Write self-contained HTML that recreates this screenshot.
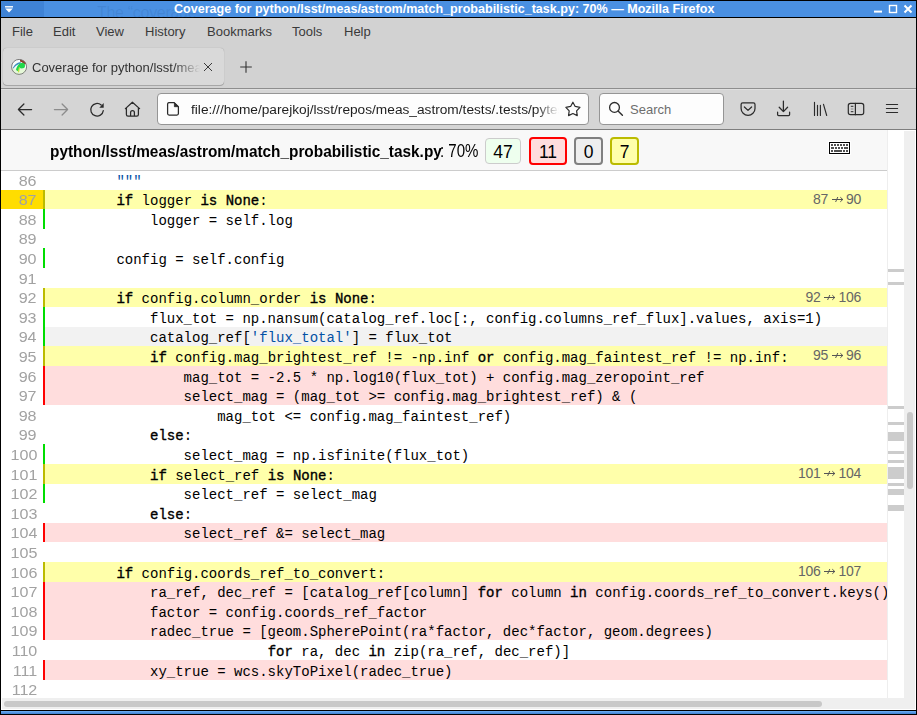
<!DOCTYPE html>
<html><head><meta charset="utf-8">
<style>
*{margin:0;padding:0;box-sizing:border-box}
html,body{width:917px;height:715px;overflow:hidden;background:#000}
body{position:relative;font-family:"Liberation Sans",sans-serif}
.abs{position:absolute}
#title{position:absolute;left:1px;top:1px;width:915px;height:16px;background:#4a90e2}
#title .dk{position:absolute;left:0;top:0;width:43px;height:16px;background:#3f83d6}
#title .txt{position:absolute;left:173px;top:1px;font:bold 12.56px "Liberation Sans",sans-serif;color:#fff;white-space:pre;line-height:15px}
#menubar{position:absolute;left:1px;top:18px;width:915px;height:26px;background:#d2d2d2}
.mi{position:absolute;top:6px;font-size:13px;color:#3a3a3a;white-space:pre;line-height:16px}
#tabbar{position:absolute;left:1px;top:44px;width:915px;height:44px;background:#d2d2d2}
#tab{position:absolute;left:2px;top:4px;width:221px;height:37px;background:#d9d9d9;border-radius:4px;box-shadow:0 0 1px rgba(0,0,0,.3),0 1px 0 rgba(0,0,0,.18)}
#nav{position:absolute;left:1px;top:88px;width:915px;height:41px;background:#d5d5d5;border-top:1px solid #8e8e8e;box-shadow:inset 0 1px 0 #e0e0e0}
#navline{position:absolute;left:1px;top:129px;width:915px;height:1px;background:#7e7e7e}
#url{position:absolute;left:157px;top:93px;width:432px;height:32px;background:#fdfdfd;border:1px solid #959595;border-radius:4px;overflow:hidden}
#search{position:absolute;left:599px;top:93px;width:125px;height:32px;background:#fdfdfd;border:1px solid #959595;border-radius:4px}
#content{position:absolute;left:1px;top:130px;width:915px;height:580px;background:#fff;overflow:hidden}
#hdr{position:absolute;left:0;top:0;width:886px;height:41px;background:#f8f8f8;border-bottom:1px solid #ccc;z-index:2}
#src{position:absolute;left:0;top:-130px;width:886px;height:710px}
.row{position:absolute;left:0;width:886px;height:19.6px;font:14px/19.6px "Liberation Mono",monospace;color:#000;white-space:pre}
.row .n{position:absolute;left:0;top:0;width:43px;height:19.6px;text-align:right;padding-right:7px;padding-top:1.5px;color:#a2a2a2;font:14px/19.6px "Liberation Sans",sans-serif}
.row .n.hl{background:#ffdd00}
.row .n i{font-style:normal;display:inline-block;transform:scaleX(1.15);transform-origin:100% 50%}
.row .t{position:absolute;left:42px;top:0;right:0;height:19.6px;border-left:2.8px solid transparent;padding-left:4.2px;padding-top:2.6px}
.row.par .t{background:#ffffaa;border-left-color:#bbbb00}
.row.mis .t{background:#ffdddd;border-left-color:#ff0000}
.row.run .t{border-left-color:#00dd00}
.row.hov .t{background:#f2f2f2}
.row b{font-weight:normal;-webkit-text-stroke:0.35px #000}
.row .str{color:#0451a5}
.ann{position:absolute;right:26px;top:0;font:14px/19.6px "Liberation Sans",sans-serif;color:#666;letter-spacing:-0.3px}
.ann span{display:inline-block}
.arr{display:inline-block;vertical-align:1px;margin:0 2.5px 0 3.5px}
#smark{position:absolute;left:886px;top:0;width:17px;height:568px;background:#fff;border-left:1px solid #eee;z-index:3}
.mk{position:absolute;left:0;width:16px;background:#ccc}
#vsb{position:absolute;left:903px;top:1px;width:11px;height:567px;background:#efefef;z-index:4}
#vthumb{position:absolute;left:3px;top:281px;width:6px;height:77px;border-radius:3px;background:#c8c8c8}
#hsb{position:absolute;left:1px;top:568px;width:902px;height:11px;background:#efefef;z-index:4}
#hthumb{position:absolute;left:2px;top:3px;width:818px;height:6px;border-radius:3px;background:#c8c8c8}
#corner{position:absolute;left:903px;top:568px;width:11px;height:11px;background:#efefef;z-index:4}
#bottomblue{position:absolute;left:1px;top:711px;width:915px;height:3px;background:linear-gradient(#6fb0f5,#3d7fd0)}
.btn{position:absolute;border-radius:4px;padding-top:1px;font:17.5px/24px "Liberation Sans",sans-serif;text-align:center;color:#000}
</style></head><body>
<div id="title"><div class="dk"></div>
<svg class="abs" style="left:4px;top:5px" width="9" height="8" viewBox="0 0 9 8"><path d="M0 0.8H8" stroke="#fff" stroke-width="1.4"/><path d="M0.2 2.6H7.8L4 6.6Z" fill="#fff"/></svg>
<div class="abs" style="left:96px;top:3px;font:16px 'Liberation Sans',sans-serif;color:rgba(20,60,120,0.12);white-space:pre;line-height:18px;letter-spacing:-0.3px">The “coverage</div>
<div class="txt">Coverage for python/lsst/meas/astrom/match_probabilistic_task.py: 70% — Mozilla Firefox</div>
<svg class="abs" style="left:872px;top:2px" width="42" height="12" viewBox="0 0 42 12"><path d="M1 8.6H9" stroke="#fff" stroke-width="2"/><rect x="16.5" y="2.5" width="7" height="7" fill="none" stroke="#fff" stroke-width="1.4"/><path d="M31.5 2.5L38.5 9.5M38.5 2.5L31.5 9.5" stroke="#fff" stroke-width="2"/></svg>
</div>
<div id="menubar">
<div class="mi" style="left:11px">File</div>
<div class="mi" style="left:52px">Edit</div>
<div class="mi" style="left:95px">View</div>
<div class="mi" style="left:144px">History</div>
<div class="mi" style="left:206px">Bookmarks</div>
<div class="mi" style="left:291px">Tools</div>
<div class="mi" style="left:343px">Help</div>
</div>
<div id="tabbar">
<div id="tab">
<svg class="abs" style="left:8px;top:11px" width="16" height="16" viewBox="0 0 16 16"><circle cx="8.1" cy="7.9" r="7.5" fill="#fbfbfb"/><path d="M0.67 9.5H15.53A7.6 7.6 0 0 1 0.67 9.5Z" fill="#e6f8d8"/><path d="M9 0.6A7.3 7.3 0 0 1 15.2 5L13 5.5Q11 2.5 9 2.5Z" fill="#8e3d26"/><path d="M1.8 9Q4 4 9.5 3L10 4.5Q5 5.5 2.5 9.5Z" fill="#3f90bd"/><path d="M5 11Q6 5.5 10 4Q14 3 14 7Q14 9.5 10.5 9.5L8.5 9L7.5 12.5Z" fill="#1fd84a"/><path d="M6.8 13L8 8L9 8.5L8 13.5Z" fill="#c6e23a"/><circle cx="8.1" cy="7.9" r="7.5" fill="none" stroke="#707070" stroke-width="0.9"/></svg>
<div class="abs" style="left:29px;top:12px;font-size:13px;color:#333;white-space:pre;line-height:16px;width:170px;overflow:hidden;-webkit-mask-image:linear-gradient(90deg,#000 142px,transparent 168px)">Coverage for python/lsst/meas/astrom/match_probabilistic_task.py</div>
<svg class="abs" style="left:200px;top:14px" width="10" height="10" viewBox="0 0 10 10"><path d="M1 1L9 9M9 1L1 9" stroke="#3a3a3a" stroke-width="1"/></svg>
</div>
<svg class="abs" style="left:238px;top:16px" width="14" height="14" viewBox="0 0 14 14"><path d="M7 1.2V12.8M1.2 7H12.8" stroke="#333" stroke-width="1.1"/></svg>
</div>
<div id="nav">
</div>
<div id="navline"></div>
<div id="url">
<div class="abs" style="left:33px;top:8px;font-size:13.7px;color:#1e1e1e;white-space:pre;line-height:16px;width:370px;overflow:hidden;-webkit-mask-image:linear-gradient(90deg,#000 345px,transparent 368px)">file:///home/parejkoj/lsst/repos/meas_astrom/tests/.tests/pytest_coverage</div>
</div>
<div id="search">
<div class="abs" style="left:30px;top:8px;font-size:13px;color:#6d6d6d;white-space:pre;line-height:16px">Search</div>
</div>
<svg class="abs" style="left:0;top:88px;z-index:5" width="917" height="42" viewBox="0 88 917 42">
<g fill="none" stroke="#2b2b2b" stroke-width="1.25" stroke-linecap="round" stroke-linejoin="round">
<path d="M18.4 109.5H31.6M23.9 104L18.4 109.5L23.9 115"/>
<path d="M54.4 109.5H67.6M62.1 104L67.6 109.5L62.1 115" stroke="#8c8c8c"/>
<path d="M103.3 110.6A6.3 6.3 0 1 1 101.2 105.0"/>
<path d="M125.4 108.6L132.4 102.2L139.6 108.6M126.4 107.8V114.4Q126.4 116 128 116H136.8Q138.4 116 138.4 114.4V107.8M130.6 116V112.6A1.9 1.9 0 0 1 134.4 112.6V116"/>
<path d="M168.6 102.6H174.2L178.4 106.8V113.6Q178.4 115.1 176.9 115.1H169.1Q167.6 115.1 167.6 113.6V104.1Q167.6 102.6 169.1 102.6Z"/>
<path d="M572.90 102.20 L575.19 106.44 L579.94 107.31 L576.61 110.81 L577.25 115.59 L572.90 113.50 L568.55 115.59 L569.19 110.81 L565.86 107.31 L570.61 106.44Z" stroke-width="1.2"/>
<circle cx="614.5" cy="107.4" r="4.9" stroke-width="1.3"/>
<path d="M618.3 111.2L622.4 115.3" stroke-width="1.4"/>
<path d="M742.7 102.9H753.4Q755 102.9 755 104.5V108.4A6.9 6.9 0 0 1 741.1 108.4V104.5Q741.1 102.9 742.7 102.9Z"/>
<path d="M744.4 107L748 110.4L751.6 107"/>
<path d="M783.4 101V111.6M779.2 107.2L783.4 111.6L787.6 107.2M777.6 112.2V114.6Q777.6 115.6 778.6 115.6H788.6Q789.6 115.6 789.6 114.6V112.2"/>
<path d="M814.5 102.3V115.5M817.5 105.2V115.5M820.4 105.2V115.5M823.5 104.3L826.7 115.5" stroke-width="1.15"/>
<rect x="848.3" y="103.3" width="15.4" height="11.4" rx="2.2" stroke-width="1.2"/>
<path d="M855.4 103.3V114.7" stroke-width="1.2"/>
<path d="M851.2 106.3H853M851.2 111.7H853" stroke-width="1"/>
<path d="M851.2 109H853" stroke-width="1" stroke="#888"/>
<path d="M886.4 104.5H897.6M886.4 108.5H897.6M886.4 112.5H897.6" stroke-width="1.15"/>
</g>
<path d="M99.3 107.8L103.7 103.1V107.8Z" fill="#2b2b2b"/>
<path d="M174.4 102.8L178.3 106.7H174.4Z" fill="#2b2b2b" stroke="#2b2b2b" stroke-width="0.8" stroke-linejoin="round"/>
</svg>
<div id="content">
<div id="src">
<div class="row " style="top:170.0px"><span class="n"><i>86</i></span><span class="t"><span class="str">        &quot;&quot;&quot;</span></span></div>
<div class="row par" style="top:189.6px"><span class="n hl"><i>87</i></span><span class="t">        <b>if</b> logger <b>is</b> <b>None</b>:</span><span class="ann"><span>87</span><svg class="arr" width="12" height="7" viewBox="0 0 12 7"><path d="M0 3.5H11M8.3 1.2L10.8 3.5L8.3 5.8M5.8 1L3.6 6" fill="none" stroke="#555" stroke-width="1"/></svg><span>90</span></span></div>
<div class="row run" style="top:209.2px"><span class="n"><i>88</i></span><span class="t">            logger = self.log</span></div>
<div class="row " style="top:228.8px"><span class="n"><i>89</i></span><span class="t"></span></div>
<div class="row run" style="top:248.4px"><span class="n"><i>90</i></span><span class="t">        config = self.config</span></div>
<div class="row " style="top:268.0px"><span class="n"><i>91</i></span><span class="t"></span></div>
<div class="row par" style="top:287.6px"><span class="n"><i>92</i></span><span class="t">        <b>if</b> config.column_order <b>is</b> <b>None</b>:</span><span class="ann"><span>92</span><svg class="arr" width="12" height="7" viewBox="0 0 12 7"><path d="M0 3.5H11M8.3 1.2L10.8 3.5L8.3 5.8M5.8 1L3.6 6" fill="none" stroke="#555" stroke-width="1"/></svg><span>106</span></span></div>
<div class="row run" style="top:307.2px"><span class="n"><i>93</i></span><span class="t">            flux_tot = np.nansum(catalog_ref.loc[:, config.columns_ref_flux].values, axis=1)</span></div>
<div class="row run hov" style="top:326.8px"><span class="n"><i>94</i></span><span class="t">            catalog_ref[<span class="str">&#x27;flux_total&#x27;</span>] = flux_tot</span></div>
<div class="row par" style="top:346.4px"><span class="n"><i>95</i></span><span class="t">            <b>if</b> config.mag_brightest_ref != -np.inf <b>or</b> config.mag_faintest_ref != np.inf:</span><span class="ann"><span>95</span><svg class="arr" width="12" height="7" viewBox="0 0 12 7"><path d="M0 3.5H11M8.3 1.2L10.8 3.5L8.3 5.8M5.8 1L3.6 6" fill="none" stroke="#555" stroke-width="1"/></svg><span>96</span></span></div>
<div class="row mis" style="top:366.0px"><span class="n"><i>96</i></span><span class="t">                mag_tot = -2.5 * np.log10(flux_tot) + config.mag_zeropoint_ref</span></div>
<div class="row mis" style="top:385.6px"><span class="n"><i>97</i></span><span class="t">                select_mag = (mag_tot &gt;= config.mag_brightest_ref) &amp; (</span></div>
<div class="row " style="top:405.2px"><span class="n"><i>98</i></span><span class="t">                    mag_tot &lt;= config.mag_faintest_ref)</span></div>
<div class="row " style="top:424.8px"><span class="n"><i>99</i></span><span class="t">            <b>else</b>:</span></div>
<div class="row run" style="top:444.4px"><span class="n"><i>100</i></span><span class="t">                select_mag = np.isfinite(flux_tot)</span></div>
<div class="row par" style="top:464.0px"><span class="n"><i>101</i></span><span class="t">            <b>if</b> select_ref <b>is</b> <b>None</b>:</span><span class="ann"><span>101</span><svg class="arr" width="12" height="7" viewBox="0 0 12 7"><path d="M0 3.5H11M8.3 1.2L10.8 3.5L8.3 5.8M5.8 1L3.6 6" fill="none" stroke="#555" stroke-width="1"/></svg><span>104</span></span></div>
<div class="row run" style="top:483.6px"><span class="n"><i>102</i></span><span class="t">                select_ref = select_mag</span></div>
<div class="row " style="top:503.2px"><span class="n"><i>103</i></span><span class="t">            <b>else</b>:</span></div>
<div class="row mis" style="top:522.8px"><span class="n"><i>104</i></span><span class="t">                select_ref &amp;= select_mag</span></div>
<div class="row " style="top:542.4px"><span class="n"><i>105</i></span><span class="t"></span></div>
<div class="row par" style="top:562.0px"><span class="n"><i>106</i></span><span class="t">        <b>if</b> config.coords_ref_to_convert:</span><span class="ann"><span>106</span><svg class="arr" width="12" height="7" viewBox="0 0 12 7"><path d="M0 3.5H11M8.3 1.2L10.8 3.5L8.3 5.8M5.8 1L3.6 6" fill="none" stroke="#555" stroke-width="1"/></svg><span>107</span></span></div>
<div class="row mis" style="top:581.6px"><span class="n"><i>107</i></span><span class="t">            ra_ref, dec_ref = [catalog_ref[column] <b>for</b> column <b>in</b> config.coords_ref_to_convert.keys()]</span></div>
<div class="row mis" style="top:601.2px"><span class="n"><i>108</i></span><span class="t">            factor = config.coords_ref_factor</span></div>
<div class="row mis" style="top:620.8px"><span class="n"><i>109</i></span><span class="t">            radec_true = [geom.SpherePoint(ra*factor, dec*factor, geom.degrees)</span></div>
<div class="row " style="top:640.4px"><span class="n"><i>110</i></span><span class="t">                          <b>for</b> ra, dec <b>in</b> zip(ra_ref, dec_ref)]</span></div>
<div class="row mis" style="top:660.0px"><span class="n"><i>111</i></span><span class="t">            xy_true = wcs.skyToPixel(radec_true)</span></div>
<div class="row " style="top:679.6px"><span class="n"><i>112</i></span><span class="t"></span></div>
</div>
<div id="hdr">
<div class="abs" style="left:49px;top:12px;font:bold 16px/19px 'Liberation Sans',sans-serif;color:#000;white-space:pre;transform:scaleX(0.96);transform-origin:0 0">python/lsst/meas/astrom/match_probabilistic_task.py</div>
<div class="abs" style="left:439px;top:11px;font:17.5px/20px 'Liberation Sans',sans-serif;color:#000;white-space:pre;transform:scaleX(0.86);transform-origin:0 0">: 70%</div>
<div class="btn" style="left:484px;top:8px;width:36px;height:26px;line-height:24px;background:#eeffee;border:1px solid #cccccc">47</div>
<div class="btn" style="left:528px;top:7px;width:38px;height:28px;background:#ffdddd;border:2px solid #ff0000">11</div>
<div class="btn" style="left:573px;top:7px;width:29px;height:28px;background:#eeeeee;border:2px solid #808080">0</div>
<div class="btn" style="left:609px;top:7px;width:29px;height:28px;background:#ffffaa;border:2px solid #bbbb00">7</div>
<svg class="abs" style="left:827px;top:11px" width="24" height="15" viewBox="828 141 24 15" shape-rendering="crispEdges"><rect x="828" y="141" width="23" height="14" fill="#fff"/><rect x="829.5" y="142.5" width="20" height="11" fill="#fff" stroke="#000" stroke-width="1.1"/><g fill="#505050"><rect x="831" y="144" width="2" height="2"/><rect x="834" y="144" width="2" height="2"/><rect x="837" y="144" width="2" height="2"/><rect x="840" y="144" width="2" height="2"/><rect x="843" y="144" width="2" height="2"/><rect x="846" y="144" width="2" height="2"/><rect x="831" y="147" width="3" height="2"/><rect x="835" y="147" width="2" height="2"/><rect x="838" y="147" width="2" height="2"/><rect x="841" y="147" width="2" height="2"/><rect x="844" y="147" width="4" height="2"/><rect x="831" y="150" width="2" height="2"/><rect x="834" y="150" width="8" height="2"/><rect x="843" y="150" width="2" height="2"/><rect x="846" y="150" width="2" height="2"/></g></svg>
</div>
<div id="smark"><div class="mk" style="top:139px;height:3px"></div><div class="mk" style="top:152px;height:3px"></div><div class="mk" style="top:276px;height:3px"></div><div class="mk" style="top:292px;height:3px"></div><div class="mk" style="top:302px;height:9px"></div><div class="mk" style="top:321px;height:3px"></div><div class="mk" style="top:330px;height:3px"></div><div class="mk" style="top:337px;height:12px"></div><div class="mk" style="top:353px;height:3px"></div><div class="mk" style="top:359px;height:6px"></div><div class="mk" style="top:375px;height:6px"></div></div>
<div id="vsb"><div id="vthumb"></div></div>
<div id="hsb"><div id="hthumb"></div></div>
<div id="corner"></div>
</div>
<div id="bottomblue"></div>
</body></html>
